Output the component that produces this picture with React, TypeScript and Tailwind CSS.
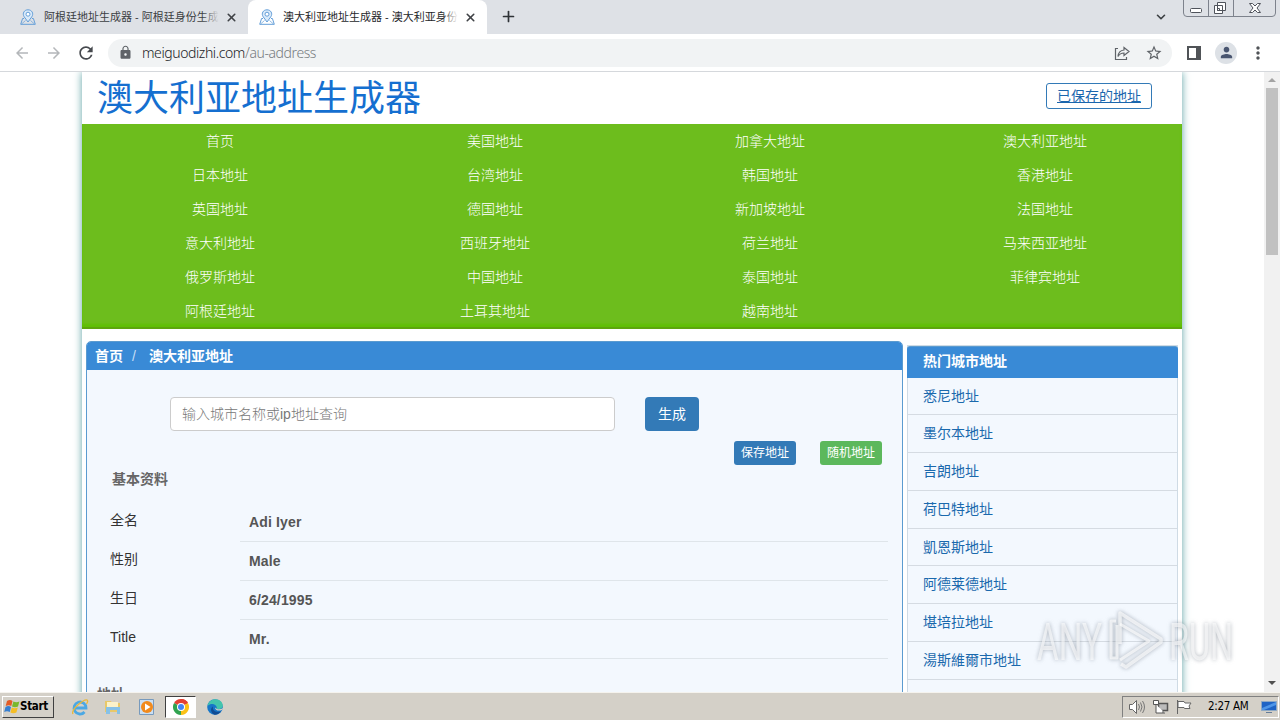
import React from 'react';
import { ChevronDown, Plus, X } from 'lucide-react';
import { MdArrowBack, MdArrowForward, MdLock, MdMoreVert, MdPerson, MdRefresh, MdStarBorder } from 'react-icons/md';

const NAV_LINKS = [
    '首页', '美国地址', '加拿大地址', '澳大利亚地址',
    '日本地址', '台湾地址', '韩国地址', '香港地址',
    '英国地址', '德国地址', '新加坡地址', '法国地址',
    '意大利地址', '西班牙地址', '荷兰地址', '马来西亚地址',
    '俄罗斯地址', '中国地址', '泰国地址', '菲律宾地址',
    '阿根廷地址', '土耳其地址', '越南地址',
];

const CITIES = ['悉尼地址', '墨尔本地址', '吉朗地址', '荷巴特地址', '凱恩斯地址', '阿德莱德地址', '堪培拉地址', '湯斯維爾市地址'];

const PROFILE = [
    { label: '全名', value: 'Adi Iyer' },
    { label: '性别', value: 'Male' },
    { label: '生日', value: '6/24/1995' },
    { label: 'Title', value: 'Mr.' },
];

function PinIcon() {
    return (
        <svg width="16" height="16" viewBox="0 0 16 16" fill="none" stroke="#639ed8" className="shrink-0">
            <path d="M4 9.5H2.6L.7 15.3h14.6L13.4 9.5H12" />
            <path d="M8 13 4.2 7.8C2 4.5 4.1.8 8 .8s6 3.7 3.8 7z" fill="#d9eafa" />
            <circle cx="8" cy="5.2" r="2" fill="#fff" />
            <path d="m1.5 15 4-3.5M14.5 15l-4-3.5" strokeWidth=".7" />
        </svg>
    );
}

function Tab({ title, active }: { title: string; active?: boolean }) {
    return (
        <div className={`flex h-[34px] w-[239px] shrink-0 items-center rounded-t-lg pl-[11px] ${active ? 'bg-white' : ''}`}>
            <PinIcon />
            <div className={`relative ml-2 w-[175px] overflow-hidden text-[11px] leading-4 whitespace-nowrap ${active ? 'text-[#26282b]' : 'text-[#3c4043]'}`}>
                {title}
                <span className={`absolute inset-y-0 right-0 w-4 bg-gradient-to-r from-transparent ${active ? 'to-white' : 'to-[#dee1e6]'}`} />
            </div>
            <X size={13} strokeWidth={3} className="ml-[6px] text-[#3f4246]" />
        </div>
    );
}

function TabStrip() {
    return (
        <div className="flex h-[34px] shrink-0 bg-[#dee1e6] pl-[9px]">
            <Tab title="阿根廷地址生成器 - 阿根廷身份生成" />
            <Tab title="澳大利亚地址生成器 - 澳大利亚身份" active />
            <Plus size={17} strokeWidth={2.4} className="mt-[8px] ml-[13px] text-[#2f3337]" />
            <ChevronDown size={14} strokeWidth={2.8} className="mt-[10px] mr-[15px] ml-auto text-[#3c4043]" />
            <svg width="94" height="18" viewBox="0 0 94 18" fill="none" stroke="#7d828c" className="mr-[3px]">
                <path d="M.5 0v13q0 3.500 3.500 3.500h85q3.500 0 3.500-3.500V0M25.500 0v16M50.500 0v16" />
                <rect x="7.500" y="8.500" width="11" height="4" rx="1" fill="#fff" stroke="#4f535b" />
                <path d="M34.500 2.500h8v8h-8zM31.500 5.500h8v8h-8z" fill="#fff" stroke="#4f535b" />
                <path d="M34.500 8.500h2v2h-2z" stroke="#4f535b" />
                <path d="M66.500 3.500h3l2.500 2.500 2.500-2.500h3l-3.500 4.500 3.500 4.500h-3L72 10l-2.500 2.500h-3L70 8z" fill="#fff" stroke="#4f535b" />
            </svg>
        </div>
    );
}

function Toolbar() {
    return (
        <div className="flex h-[38px] shrink-0 items-center border-b border-[#d5d8dc] bg-white pl-[13px] text-[#5f6368]">
            <MdArrowBack size={18} className="text-[#b4b7ba]" />
            <MdArrowForward size={18} className="ml-[14px] text-[#b4b7ba]" />
            <MdRefresh size={20} className="ml-[13px] text-[#46494e]" />
            <div className="ml-[12px] flex h-7 w-[1064px] items-center rounded-full bg-[#f1f3f4] pr-[9px] pl-[10px]">
                <MdLock size={15} />
                <span className="ml-[9px] font-['Noto_Sans','Open_Sans',sans-serif] text-[14px] font-light tracking-[-0.41px] text-[#777b80]">
                    <span className="text-[#202124]">meiguodizhi.com</span>/au-address
                </span>
                <svg width="16" height="16" viewBox="0 0 16 16" fill="none" stroke="currentColor" strokeWidth="1.2" className="ml-auto">
                    <path d="M4 3.500H1.500v11h11V12" />
                    <path d="M10 2.500 15 6.500 10 10.500V8Q6 8 4 11.500 4.500 5.500 10 5z" />
                </svg>
                <MdStarBorder size={18} className="ml-[15px]" />
            </div>
            <svg width="14" height="14" viewBox="0 0 14 14" className="ml-[15px]">
                <path d="M1 1h12v12H1z" fill="none" stroke="#505357" strokeWidth="2" />
                <path d="M9 1h4v12H9z" fill="#505357" />
            </svg>
            <div className="ml-[14px] flex size-[22px] items-center justify-center rounded-full bg-[#dde1e6]">
                <MdPerson size={17} className="text-[#4a5670]" />
            </div>
            <MdMoreVert size={20} className="ml-[11px] text-[#505357]" />
        </div>
    );
}

function SiteHeader() {
    return (
        <header>
            <div className="flex h-[52px] items-start justify-between pr-[30px] pl-[15px]">
                <h1 className="text-[36px] leading-[54px] font-normal text-[#156fd0]">澳大利亚地址生成器</h1>
                <a className="mt-[11px] flex h-[26px] w-[106px] items-center justify-center rounded-[3px] border border-[#337ab7] text-[14px] text-[#1a66ad] underline">已保存的地址</a>
            </div>
            <nav className="grid h-[205px] auto-rows-[34px] grid-cols-4 border-b-2 border-[#5da50e] bg-[#6dbd1d] shadow-[inset_0_-3px_3px_#5fc004]">
                {NAV_LINKS.map((link) => (
                    <a key={link} className="pl-px text-center text-[14px] leading-[34px] font-light text-white">{link}</a>
                ))}
            </nav>
        </header>
    );
}

function AddressPanel() {
    return (
        <section className="mt-3 h-[400px] w-[817px] shrink-0 rounded-t-[5px] border border-[#5b9bd0] bg-[#f3f8fe]">
            <div className="flex h-[28px] items-center rounded-t-[4px] bg-[#398ad6] pl-2 text-[14px] font-bold text-white">
                <span>首页</span>
                <span className="ml-[9px] font-normal text-[#c6def5]">/</span>
                <span className="ml-[13px]">澳大利亚地址</span>
            </div>
            <div className="mt-[27px] flex pl-[83px]">
                <div className="flex h-[34px] w-[445px] items-center rounded border border-[#ccc] bg-white pl-[11px] text-[14px] font-light text-[#777]">输入城市名称或ip地址查询</div>
                <button className="ml-[30px] h-[34px] w-[54px] rounded bg-[#337ab7] text-[14px] text-white">生成</button>
            </div>
            <div className="mt-[10px] flex justify-end gap-6 pr-5 text-[12px] text-white">
                <button className="h-6 w-[62px] rounded-[3px] bg-[#337ab7]">保存地址</button>
                <button className="h-6 w-[62px] rounded-[3px] bg-[#5cb85c]">随机地址</button>
            </div>
            <h2 className="mt-1 pl-[25px] text-[14px] leading-5 font-bold text-[#666]">基本资料</h2>
            <div className="mt-[14px] pr-[14px] pl-[23px]">
                {PROFILE.map((row) => (
                    <div key={row.label} className="flex h-[39px] items-stretch text-[14px]">
                        <span className="w-[130px] pt-[7px] leading-5 text-[#333]">{row.label}</span>
                        <span className="flex-1 border-b border-[#dfe5ea] pt-[9px] pl-[9px] leading-5 font-bold tracking-[0.15px] text-[#555]">{row.value}</span>
                    </div>
                ))}
            </div>
            <h2 className="mt-[25px] pl-[10px] text-[14px] leading-5 font-bold text-[#666]">地址</h2>
        </section>
    );
}

function CitySidebar() {
    return (
        <aside className="mt-4 ml-1 h-[400px] w-[271px] border border-[#cfdbe5] bg-[#f3f8fe]">
            <h2 className="-mx-px h-[31.500px] rounded-t-[3px] border-t border-[#5b9bd0] bg-[#398ad6] pl-4 text-[14px] leading-[29px] font-bold text-white">热门城市地址</h2>
            {CITIES.map((city) => (
                <a key={city} className="block h-[37.750px] border-b border-[#d5dbe2] pl-[15px] text-[14px] leading-[37px] text-[#1a69ad]">{city}</a>
            ))}
            <a className="block pl-[15px] text-[14px] leading-[39px] text-[#1a69ad]">卡索地址</a>
        </aside>
    );
}

function Scrollbar() {
    return (
        <div className="flex h-full w-4 shrink-0 flex-col items-center bg-[#f1f1f1]">
            <svg width="16" height="16" viewBox="0 0 16 16"><path d="m4 10 4-4 4 4z" fill="#a3a3a3" /></svg>
            <div className="h-[167px] w-3 bg-[#c1c1c1]" />
            <svg width="16" height="16" viewBox="0 0 16 16" className="mt-auto"><path d="m4 5 4 4 4-4z" fill="#505050" /></svg>
        </div>
    );
}

function Watermark() {
    return (
        <svg width="200" height="68" viewBox="0 0 200 68" className="absolute top-[534px] left-[1036px] drop-shadow-[0_0_2px_rgba(90,100,115,0.75)]">
            <g fill="#fff" fillOpacity=".6" fontFamily="Roboto" fontSize="51" fontWeight="400">
                <text x="1" y="54" textLength="65" lengthAdjust="spacingAndGlyphs">ANY</text>
                <text x="133" y="54" textLength="64" lengthAdjust="spacingAndGlyphs">RUN</text>
            </g>
            <g fill="none" stroke="#fff" strokeOpacity=".65" strokeWidth="3.500" strokeLinejoin="round">
                <path d="M84 38V7l41 26v3L90 61l-5-3" />
                <path d="M84 18l29 17-29 19" strokeWidth="3" />
                <path d="M80 15h-5v37h6V19" strokeWidth="3" />
            </g>
        </svg>
    );
}

function Taskbar() {
    return (
        <footer className="flex h-7 shrink-0 items-center border-t border-[#f5f3ee] bg-[#d4d0c8] pl-[2px]">
            <button className="flex h-[22px] w-[52px] items-center border border-t-white border-r-[#404040] border-b-[#404040] border-l-white pl-px font-['DejaVu_Sans_Condensed','DejaVu_Sans',sans-serif] text-[11.500px] font-bold tracking-[-0.3px] text-black">
                <svg width="16" height="16" viewBox="0 0 16 16" className="shrink-0">
                    <path d="M3 2q3-2 5.500 0L7.300 7Q5 5.500 1.700 7z" fill="#e45c25" />
                    <path d="M9.400 2.500q3 1.500 6 0L14 7.500q-3 1.500-6 0z" fill="#79b82b" />
                    <path d="M1.500 8q3-1.800 5.500 0L5.800 13Q3 11.500.2 13z" fill="#377fd0" />
                    <path d="M7.800 8.500q3 1.500 6 0l-1.400 5q-3 1.500-6 0z" fill="#f5bd24" />
                </svg>
                <span className="pt-px">Start</span>
            </button>
            {/* Internet Explorer */}
            <svg width="18" height="18" viewBox="0 0 18 18" className="ml-[17px]">
                <path d="M4 10h11a6 6 0 1 0-1.500 4" fill="none" stroke="#4ba8e4" strokeWidth="2.800" />
                <path d="M2 16C-.5 12 12 1.500 16 2q1.500 1-.5 4" fill="none" stroke="#e9b83a" strokeWidth="1.300" />
            </svg>
            {/* Explorer */}
            <svg width="18" height="18" viewBox="0 0 18 18" className="ml-[15px]">
                <path d="M1 3h6l1 2h8v9H1z" fill="#e8c869" />
                <path d="M3 4h11v6H3z" fill="#fbf2c9" />
                <path d="M2 9h14v7h-3v-4H6v4H2z" fill="#86c1e7" />
            </svg>
            {/* Media player */}
            <svg width="18" height="18" viewBox="0 0 18 18" className="ml-[16px]">
                <path d="M1.500 1.500h14v15h-14z" fill="#cbdff2" stroke="#779abd" />
                <circle cx="9" cy="9" r="6" fill="#f18a1c" />
                <path d="m7 5.500 5.500 3.500L7 12.500z" fill="#fff" />
            </svg>
            <div className="ml-[9px] flex h-[22px] w-[31px] items-center justify-center border border-t-[#404040] border-r-white border-b-white border-l-[#404040] bg-white">
                <svg width="16" height="16" viewBox="0 0 16 16">
                    <path d="M8 8 1.070 4A8 8 0 0 1 14.930 4z" fill="#e34133" />
                    <path d="M8 8V0A8 8 0 0 1 14.930 4z" fill="#e34133" />
                    <path d="M8 8 14.930 4A8 8 0 0 1 8 16z" fill="#fbc116" />
                    <path d="M8 8v8A8 8 0 0 1 1.070 4z" fill="#31a350" />
                    <circle cx="8" cy="8" r="4" fill="#fff" />
                    <circle cx="8" cy="8" r="3" fill="#4285f4" />
                </svg>
            </div>
            {/* Edge */}
            <svg width="16" height="16" viewBox="0 0 16 16" className="ml-[11px]">
                <circle cx="8" cy="8" r="7.800" fill="#1676c8" />
                <path d="M.5 7C1.500 2.500 4.500.2 8.500.2c4 0 7.300 3 7.300 6.300 0 3-3 4-6 3.500C10.500 6 5 3 .5 7z" fill="#43c5ad" />
                <path d="M6 7.500c-1 4 3 6.500 8 4.800-1.500 2.300-4 3.700-6.500 3.500C3.500 14 3 9 6 7.500z" fill="#114c93" />
                <path d="M8 8.500c0 3 4 4 7.300 2.200L16 9q-3 2-6 1z" fill="#d4d0c8" />
            </svg>
            <div className="mr-px ml-auto flex h-[22px] w-[157px] items-center border border-t-[#808080] border-r-white border-b-white border-l-[#808080] pl-[5px]">
                <svg width="18" height="16" viewBox="0 0 18 16" fill="none" stroke="#777" className="shrink-0">
                    <path d="M1.500 5.500h3l4-4v13l-4-4h-3z" fill="#fff" stroke="#666" />
                    <path d="M10.500 5q2 3 0 6M12.500 3.500q3 4.500 0 9M14.500 2q4 6 0 12" />
                </svg>
                <svg width="17" height="16" viewBox="0 0 17 16" className="ml-[6px] shrink-0" fill="#fff" stroke="#555">
                    <path d="M6.500 4.500h9v7h-9z" fill="#bbb" strokeWidth="1.500" />
                    <path d="M1.500 1.500h5v4h-5zM4 5.500v8.500h9M11 12v2" />
                </svg>
                <svg width="17" height="16" viewBox="0 0 17 16" className="ml-[7px] shrink-0" fill="#fff" stroke="#666">
                    <path d="M1.500 1v14M2 2.500h6l1 1.500h6l-2 3 1 2.500H8.500L8 8.500H2z" />
                </svg>
                <span className="ml-[15px] pt-px font-['DejaVu_Sans_Condensed','DejaVu_Sans',sans-serif] text-[11.500px] tracking-[-0.3px] whitespace-nowrap text-black">2:27 AM</span>
                <svg width="16" height="14" viewBox="0 0 16 14" className="mr-px ml-auto shrink-0">
                    <path d="M.5 1.500h15v9H.5z" fill="#1e63c5" stroke="#8da8c4" />
                    <path d="m1 8 14-6v3L3 10H1z" fill="#4e96e8" />
                    <path d="M5 12h6v1H5z" fill="#657d99" />
                </svg>
            </div>
        </footer>
    );
}

export default function App() {
    return (
        <div className="flex h-[720px] w-[1280px] flex-col overflow-hidden bg-white font-['Liberation_Sans','Noto_Sans_CJK_SC',sans-serif]">
            <TabStrip />
            <Toolbar />
            <div className="relative flex h-[620px] shrink-0 overflow-hidden">
                <div className="h-full flex-1 overflow-hidden pl-[82px]">
                    <div className="h-[700px] w-[1100px] bg-white shadow-[0_0_8px_#5fa3a6]">
                        <SiteHeader />
                        <main className="flex items-start pl-1">
                            <AddressPanel />
                            <CitySidebar />
                        </main>
                    </div>
                </div>
                <Scrollbar />
                <Watermark />
            </div>
            <Taskbar />
        </div>
    );
}
